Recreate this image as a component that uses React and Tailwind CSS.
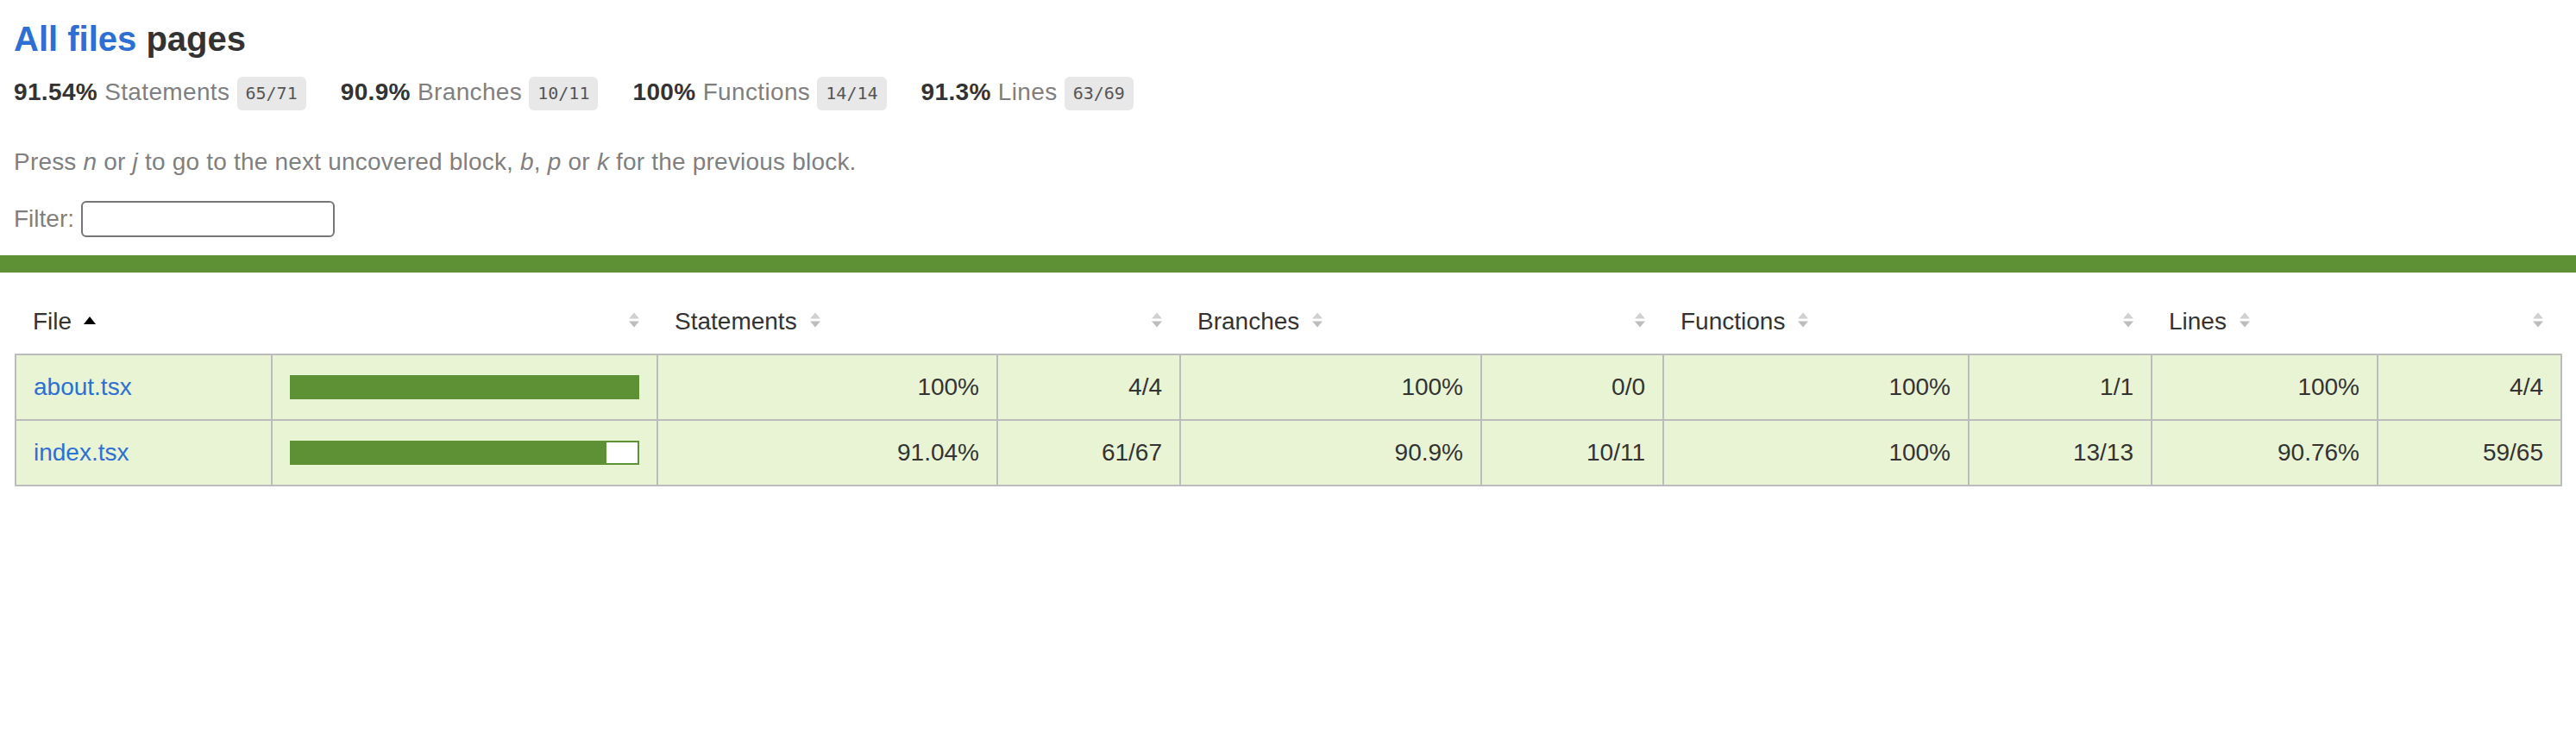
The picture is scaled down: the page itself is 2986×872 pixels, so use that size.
const summary = [
  { pct: "91.54%", label: "Statements", frac: "65/71" },
  { pct: "90.9%", label: "Branches", frac: "10/11" },
  { pct: "100%", label: "Functions", frac: "14/14" },
  { pct: "91.3%", label: "Lines", frac: "63/69" },
];

const rows = [
  {
    file: "about.tsx",
    fill: 100,
    cells: ["100%", "4/4", "100%", "0/0", "100%", "1/1", "100%", "4/4"],
  },
  {
    file: "index.tsx",
    fill: 91,
    cells: ["91.04%", "61/67", "90.9%", "10/11", "100%", "13/13", "90.76%", "59/65"],
  },
];

const colWidths = [
  "w-[297px]",
  "w-[447px]",
  "w-[394px]",
  "w-[212px]",
  "w-[349px]",
  "w-[211px]",
  "w-[354px]",
  "w-[212px]",
  "w-[262px]",
  "w-[213px]",
];

function Sorter({ active }) {
  return (
    <svg
      viewBox="0 0 14 20"
      className="ml-[14px] inline-block h-[20px] w-[14px] align-baseline"
    >
      {active ? (
        <path d="M0 14 L7 5 L14 14 Z" fill="#000" />
      ) : (
        <>
          <path d="M1 7.5 L7 0.5 L13 7.5 Z" fill="#d0d0d0" />
          <path d="M1 10.5 L7 17.5 L13 10.5 Z" fill="#bdbdbd" />
        </>
      )}
    </svg>
  );
}

function Chart({ fill }) {
  return (
    <div className="flex h-[28px] border-2 border-[#5e9135]">
      <div className="h-full bg-[#5e9135]" style={{ width: `${fill}%` }} />
      {fill < 100 && <div className="h-full flex-1 bg-white" />}
    </div>
  );
}

export default function App() {
  return (
    <div
      className="min-h-screen bg-white text-[28px] leading-[34px] text-[#333]"
      style={{ fontFamily: '"Liberation Sans", Arial, sans-serif' }}
    >
      <div className="px-4 pt-[21px] pb-[21px]">
        <h1 className="text-[40px] font-bold leading-[48px]">
          <a href="#" className="text-[#2d6fd2]">
            All files
          </a>{" "}
          pages
        </h1>
        <div className="flex">
          {summary.map((s) => (
            <div
              key={s.label}
              className="pt-[20px] pb-[15px] pr-[40px] whitespace-nowrap tracking-[0.35px]"
            >
              <span className="font-bold">{s.pct}</span>{" "}
              <span className="text-[#7f7f7f]">{s.label}</span>{" "}
              <span className="inline-block h-[39px] rounded-[6px] bg-[#e8e8e8] px-[10px] align-middle font-['DejaVu_Sans_Mono',monospace] text-[20px] leading-[39px] tracking-normal text-[#555]">
                {s.frac}
              </span>
            </div>
          ))}
        </div>
        <p className="my-[28px] tracking-[0.2px] text-[#7f7f7f]">
          Press <em>n</em> or <em>j</em> to go to the next uncovered block,{" "}
          <em>b</em>, <em>p</em> or <em>k</em> for the previous block.
        </p>
        <div className="flex h-[42px] items-center text-[#7f7f7f]">
          <span>Filter:</span>
          <input
            type="search"
            className="ml-[8px] h-[42px] w-[294px] rounded-[6px] border-2 border-[#767676] bg-white px-[4px] text-[26px] outline-none"
          />
        </div>
      </div>
      <div className="h-[20px] bg-[#5e9135]" />
      <div className="px-[17px] pt-[20px]">
        <table className="w-full table-fixed border-collapse">
          <colgroup>
            {colWidths.map((w, i) => (
              <col key={i} className={w} />
            ))}
          </colgroup>
          <thead>
            <tr className="border-b-2 border-[#bcbcbc]">
              <th className="p-[20px] text-left font-normal whitespace-nowrap">
                File
                <Sorter active />
              </th>
              <th className="p-[20px] text-right font-normal">
                <Sorter />
              </th>
              {["Statements", "Branches", "Functions", "Lines"].map((h) => [
                <th key={h} className="p-[20px] text-left font-normal whitespace-nowrap">
                  {h}
                  <Sorter />
                </th>,
                <th key={h + "-abs"} className="p-[20px] text-right font-normal">
                  <Sorter />
                </th>,
              ])}
            </tr>
          </thead>
          <tbody className="border-2 border-[#bcbcbc]">
            {rows.map((r) => (
              <tr key={r.file} className="border-b-2 border-[#bcbcbc] bg-[#e9f4d5]">
                <td className="border-r-2 border-[#bcbcbc] p-[20px] whitespace-nowrap">
                  <a href="#" className="text-[#2d6fd2]">
                    {r.file}
                  </a>
                </td>
                <td className="border-r-2 border-[#bcbcbc] p-[20px] align-middle">
                  <Chart fill={r.fill} />
                </td>
                {r.cells.map((c, i) => (
                  <td
                    key={i}
                    className={
                      i === r.cells.length - 1
                        ? "p-[20px] text-right"
                        : "border-r-2 border-[#bcbcbc] p-[20px] text-right"
                    }
                  >
                    {c}
                  </td>
                ))}
              </tr>
            ))}
          </tbody>
        </table>
      </div>
    </div>
  );
}
